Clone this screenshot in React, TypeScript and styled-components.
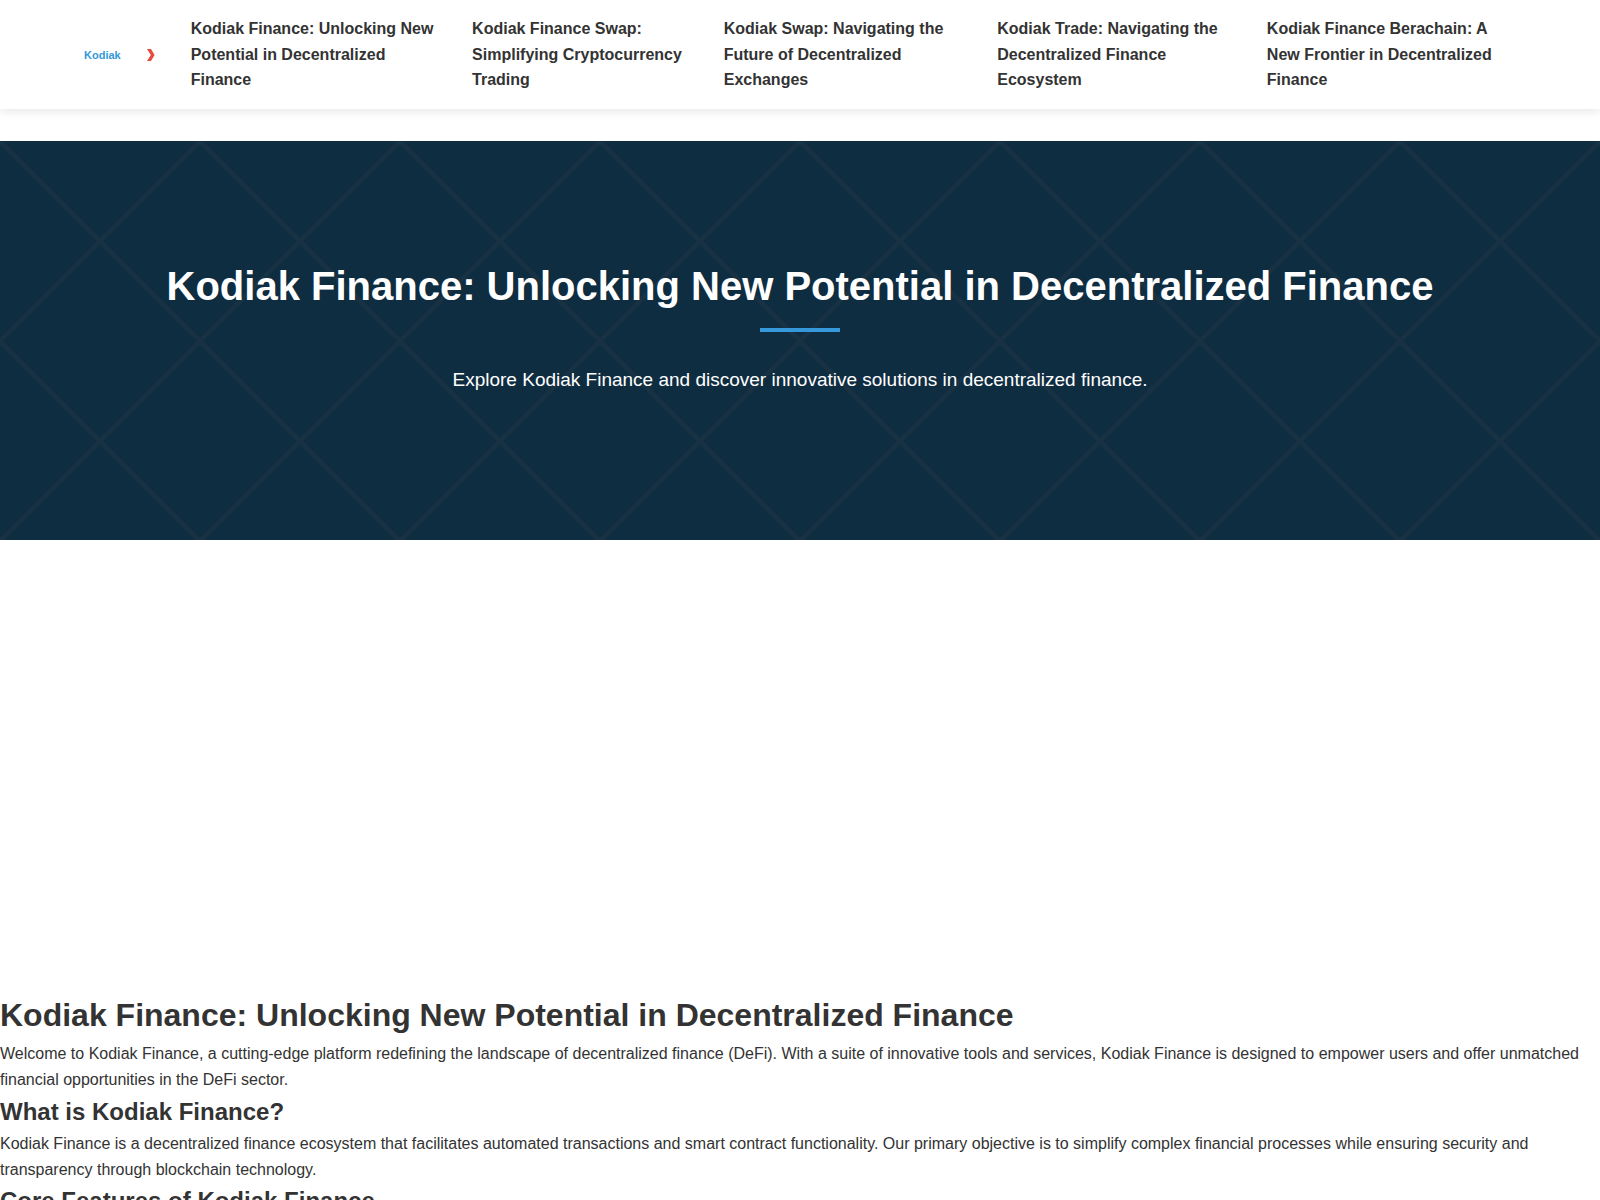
import React from "react";
import styled, { createGlobalStyle } from "styled-components";

const GlobalStyle = createGlobalStyle`
  *, *::before, *::after { box-sizing: border-box; margin: 0; padding: 0; }
  body {
    font-family: "Liberation Sans", Arial, sans-serif;
    font-size: 16px;
    line-height: 1.6;
    color: #333;
    background: #fff;
  }
`;

const Header = styled.header`
  display: flex;
  align-items: center;
  gap: 36px;
  padding: 16px 5%;
  background: #fff;
  box-shadow: 0 2px 10px rgba(0, 0, 0, 0.1);
`;

const Logo = styled.a`
  flex: none;
  display: flex;
  align-items: center;
  gap: 26px;
  padding: 2px 0 0 4px;
  text-decoration: none;
`;

const LogoName = styled.span`
  font-size: 11px;
  font-weight: bold;
  color: #3498db;
`;

const LogoMark = styled.svg`
  display: block;
  width: 8px;
  height: 12px;
  fill: #e74c3c;
`;

const NavList = styled.ul`
  display: flex;
  gap: 32px;
  list-style: none;
`;

const NavLink = styled.a`
  display: block;
  font-weight: bold;
  color: #333;
  text-decoration: none;
`;

const Hero = styled.section`
  display: flex;
  flex-direction: column;
  align-items: center;
  margin-top: 32px;
  padding: 113px 5% 145px;
  text-align: center;
  color: #fff;
  background-color: #0f2d41;
  background-image:
    linear-gradient(45deg, transparent 49%, #183143 49.4%, #183143 50.6%, transparent 51%),
    linear-gradient(-45deg, transparent 49%, #183143 49.4%, #183143 50.6%, transparent 51%);
  background-size: 200px 200px;
`;

const HeroTitle = styled.h1`
  font-size: 40px;
`;

const HeroRule = styled.div`
  width: 80px;
  height: 4px;
  margin: 10px 0 33px;
  background: #3498db;
`;

const HeroText = styled.p`
  font-size: 19px;
`;

const Article = styled.main`
  padding-top: 450px;
`;

const Title = styled.h1`
  font-size: 32px;
`;

const Subtitle = styled.h2`
  font-size: 24px;
`;

const links = [
  "Kodiak Finance: Unlocking New Potential in Decentralized Finance",
  "Kodiak Finance Swap: Simplifying Cryptocurrency Trading",
  "Kodiak Swap: Navigating the Future of Decentralized Exchanges",
  "Kodiak Trade: Navigating the Decentralized Finance Ecosystem",
  "Kodiak Finance Berachain: A New Frontier in Decentralized Finance",
];

export default function App() {
  return (
    <>
      <GlobalStyle />
      <Header>
        <Logo href="#">
          <LogoName>Kodiak</LogoName>
          <LogoMark viewBox="0 0 8 12" aria-hidden="true">
            <path d="M0 0H4L7.6 6L4 12H0L3.8 6Z" />
          </LogoMark>
        </Logo>
        <nav>
          <NavList>
            {links.map((label) => (
              <li key={label}>
                <NavLink href="#">{label}</NavLink>
              </li>
            ))}
          </NavList>
        </nav>
      </Header>
      <Hero>
        <HeroTitle>Kodiak Finance: Unlocking New Potential in Decentralized Finance</HeroTitle>
        <HeroRule />
        <HeroText>Explore Kodiak Finance and discover innovative solutions in decentralized finance.</HeroText>
      </Hero>
      <Article>
        <Title>Kodiak Finance: Unlocking New Potential in Decentralized Finance</Title>
        <p>
          Welcome to Kodiak Finance, a cutting-edge platform redefining the landscape of decentralized
          finance (DeFi). With a suite of innovative tools and services, Kodiak Finance is designed to
          empower users and offer unmatched financial opportunities in the DeFi sector.
        </p>
        <Subtitle>What is Kodiak Finance?</Subtitle>
        <p>
          Kodiak Finance is a decentralized finance ecosystem that facilitates automated transactions
          and smart contract functionality. Our primary objective is to simplify complex financial
          processes while ensuring security and transparency through blockchain technology.
        </p>
        <Subtitle>Core Features of Kodiak Finance</Subtitle>
      </Article>
    </>
  );
}
